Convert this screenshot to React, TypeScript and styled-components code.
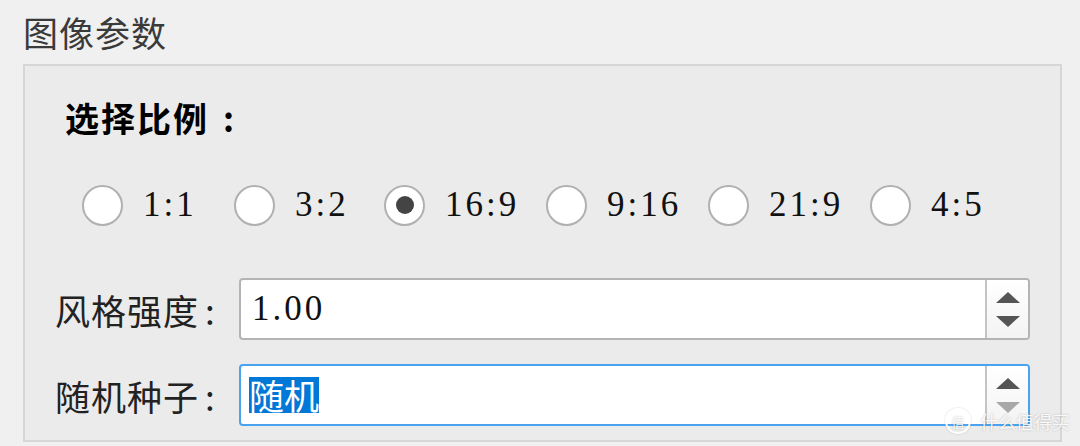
import styled, { createGlobalStyle } from "styled-components";

const GlobalStyle = createGlobalStyle`
  html, body {
    margin: 0;
    padding: 0;
    background: #f0f0f0;
    overflow: hidden;
  }
`;

const ratios = [
  { label: "1:1", w: 152 },
  { label: "3:2", w: 150 },
  { label: "16:9", w: 162, checked: true },
  { label: "9:16", w: 162 },
  { label: "21:9", w: 162 },
  { label: "4:5", w: 130 },
];

export default function App() {
  return (
    <>
      <GlobalStyle />
      <Page>
        <Title>图像参数</Title>
        <GroupBox>
          <SectionLabel>
            选择比例<Colon $pad={14}>:</Colon>
          </SectionLabel>
          <RadioRow>
            {ratios.map((r) => (
              <RadioItem key={r.label} $w={r.w}>
                <RadioCircle $checked={!!r.checked} />
                <RadioText>{r.label}</RadioText>
              </RadioItem>
            ))}
          </RadioRow>
          <FieldRow $gap={52}>
            <FieldLabel>
              风格强度<Colon $pad={6}>:</Colon>
            </FieldLabel>
            <SpinBox>
              <SpinInput>
                <NumberText>1.00</NumberText>
              </SpinInput>
              <SpinButtons>
                <ArrowUp />
                <ArrowDown />
              </SpinButtons>
            </SpinBox>
          </FieldRow>
          <FieldRow $gap={24}>
            <FieldLabel>
              随机种子<Colon $pad={6}>:</Colon>
            </FieldLabel>
            <SpinBox $focused>
              <SpinInput>
                <Selected>随机</Selected>
              </SpinInput>
              <SpinButtons>
                <ArrowUp />
                <ArrowDown $disabled />
              </SpinButtons>
            </SpinBox>
          </FieldRow>
        </GroupBox>
        <Watermark>
          <WmLogo>值</WmLogo>
          <span>什么值得买</span>
        </Watermark>
      </Page>
    </>
  );
}

const Page = styled.div`
  position: relative;
  width: 1080px;
  height: 446px;
  padding: 12px 18px 0 23px;
  box-sizing: border-box;
  display: flex;
  flex-direction: column;
`;

const Title = styled.div`
  font-family: "Noto Sans CJK SC", sans-serif;
  font-size: 35px;
  letter-spacing: 1px;
  line-height: 40px;
  height: 52px;
  color: #3a3a3a;
`;

const GroupBox = styled.div`
  width: 1039px;
  height: 378px;
  box-sizing: border-box;
  border: 2px solid #d6d6d6;
  background: #ebebeb;
  display: flex;
  flex-direction: column;
  padding: 32px 0 0 0;
`;

const SectionLabel = styled.div`
  font-family: "Noto Sans CJK SC", sans-serif;
  font-weight: 700;
  font-size: 34px;
  letter-spacing: 2px;
  line-height: 40px;
  padding-left: 40px;
  color: #000;
`;

const Colon = styled.span<{ $pad: number }>`
  padding-left: ${(p) => p.$pad}px;
`;

const RadioRow = styled.div`
  display: flex;
  align-items: center;
  padding-left: 57px;
  margin-top: 46px;
  height: 42px;
`;

const RadioItem = styled.div<{ $w: number }>`
  display: flex;
  align-items: center;
  gap: 20px;
  width: ${(p) => p.$w}px;
  flex-shrink: 0;
`;

const RadioCircle = styled.div<{ $checked: boolean }>`
  width: 41px;
  height: 41px;
  box-sizing: border-box;
  border-radius: 50%;
  border: 2px solid #b0b0b0;
  background: #fff;
  display: flex;
  align-items: center;
  justify-content: center;
  &::after {
    content: "";
    display: ${(p) => (p.$checked ? "block" : "none")};
    width: 18px;
    height: 18px;
    border-radius: 50%;
    background: #444;
  }
`;

const RadioText = styled.span`
  font-family: "Liberation Serif", serif;
  font-size: 35px;
  letter-spacing: 3px;
  color: #111;
`;

const FieldRow = styled.div<{ $gap: number }>`
  display: flex;
  align-items: center;
  padding-left: 30px;
  margin-top: ${(p) => p.$gap}px;
`;

const FieldLabel = styled.div`
  width: 184px;
  flex-shrink: 0;
  font-family: "Noto Sans CJK SC", sans-serif;
  font-size: 35px;
  letter-spacing: 1px;
  color: #222;
`;

const SpinBox = styled.div<{ $focused?: boolean }>`
  display: flex;
  width: 791px;
  height: 62px;
  box-sizing: border-box;
  border: 2px solid ${(p) => (p.$focused ? "#4aa3ef" : "#b4b4b4")};
  border-radius: 4px;
  background: #fff;
  overflow: hidden;
`;

const SpinInput = styled.div`
  flex: 1;
  display: flex;
  align-items: center;
  padding-left: 8px;
`;

const NumberText = styled.span`
  font-family: "Liberation Serif", serif;
  font-size: 35px;
  letter-spacing: 3px;
  color: #111;
  padding-left: 3px;
`;

const Selected = styled.span`
  font-family: "Noto Sans CJK SC", sans-serif;
  font-size: 35px;
  line-height: 36px;
  background: #0078d7;
  color: #fff;
`;

const SpinButtons = styled.div`
  width: 41px;
  border-left: 2px solid #c4c4c4;
  background: linear-gradient(#ffffff, #f3f3f3);
  display: flex;
  flex-direction: column;
  align-items: center;
  justify-content: center;
  gap: 13px;
`;

const ArrowUp = styled.div`
  width: 0;
  height: 0;
  border-left: 12px solid transparent;
  border-right: 12px solid transparent;
  border-bottom: 11px solid #555;
`;

const ArrowDown = styled.div<{ $disabled?: boolean }>`
  width: 0;
  height: 0;
  border-left: 12px solid transparent;
  border-right: 12px solid transparent;
  border-top: 11px solid ${(p) => (p.$disabled ? "#a8a8a8" : "#555")};
`;

const Watermark = styled.div`
  position: absolute;
  right: 10px;
  bottom: 12px;
  display: flex;
  align-items: center;
  gap: 9px;
  font-family: "Noto Sans CJK SC", sans-serif;
  font-size: 18px;
  color: rgba(255, 255, 255, 0.9);
  text-shadow: 0 0 2px rgba(0, 0, 0, 0.25);
`;

const WmLogo = styled.span`
  width: 22px;
  height: 22px;
  border: 2px solid rgba(255, 255, 255, 0.9);
  border-radius: 50%;
  font-size: 13px;
  display: flex;
  align-items: center;
  justify-content: center;
  box-shadow: 0 0 2px rgba(0, 0, 0, 0.2);
`;
